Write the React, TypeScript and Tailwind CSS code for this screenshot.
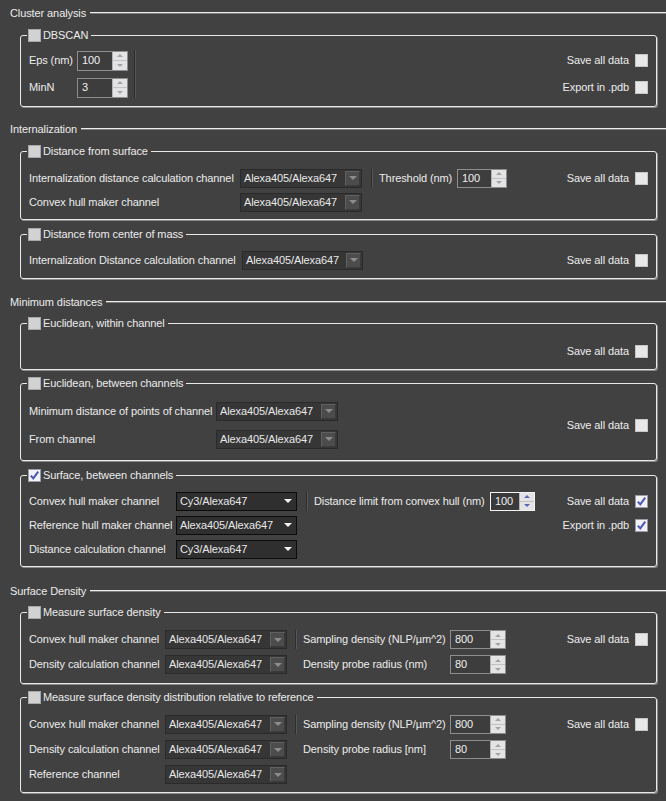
import React from 'react';

type Kids = { children?: React.ReactNode };

const Check = ({ on, title }: { on?: boolean; title?: boolean }) => (
  <span
    className={`flex h-[13px] w-[13px] shrink-0 items-center justify-center border ${
      on
        ? 'border-[#9a9aa8] bg-[#f2f2f6]'
        : title
          ? 'border-[#a8a8a8] bg-[#d2d2d2]'
          : 'border-[#c6c6c6] bg-[#e8e8e8]'
    }`}
  >
    {on && (
      <svg width="11" height="11" viewBox="0 0 11 11">
        <path d="M1.8 5.6 L4.3 8.4 L9.2 1.6" stroke="#4a58b4" strokeWidth="2" fill="none" />
      </svg>
    )}
  </span>
);

const Tri = ({ up, color }: { up?: boolean; color: string }) => (
  <span
    className={`h-0 w-0 border-x-[3px] border-x-transparent ${up ? 'border-b-[3px]' : 'border-t-[3px]'} ${color}`}
  />
);

const Spin = ({ v, w, on, tall }: { v: string; w: string; on?: boolean; tall?: boolean }) => (
  <div
    className={`flex shrink-0 ${tall ? 'h-[20px]' : 'h-[19px]'} ${w} border ${
      on ? 'border-[#f4f4f4] bg-[#3a3a3a]' : 'border-[#8e8e8e] bg-[#3d3d3d]'
    }`}
  >
    <span className="flex flex-1 items-center pl-[4px] text-[#f0f0f0]">{v}</span>
    <div className="flex w-[15px] flex-col border-l border-[#b4b4b4] bg-[#e4e4e6]">
      <span className="flex flex-1 items-center justify-center border-b border-[#c2c2c2]">
        <Tri up color={on ? 'border-b-[#5a68b0] border-t-[#5a68b0]' : 'border-b-[#a4a4a4] border-t-[#a4a4a4]'} />
      </span>
      <span className="flex flex-1 items-center justify-center">
        <Tri color={on ? 'border-b-[#5a68b0] border-t-[#5a68b0]' : 'border-b-[#a4a4a4] border-t-[#a4a4a4]'} />
      </span>
    </div>
  </div>
);

const Combo = ({ v, w, on }: { v: string; w: string; on?: boolean }) => (
  <div
    className={`flex h-[19px] shrink-0 ${w} items-center border ${
      on ? 'border-[#0c0c0c] bg-[#2f2f2f]' : 'border-[#2a2a2a] bg-[#363636]'
    }`}
  >
    <span className="flex-1 pl-[3px] text-[#e8e8e8]">{v}</span>
    {on ? (
      <span className="mr-[2px] flex h-[13px] w-[13px] items-center justify-center">
        <span className="h-0 w-0 border-x-[4px] border-t-[4px] border-x-transparent border-t-[#f4f4f4]" />
      </span>
    ) : (
      <span className="mr-[1px] flex h-[15px] w-[15px] items-center justify-center border border-t-[#606060] border-l-[#606060] border-b-[#3a3a3a] border-r-[#3a3a3a] bg-[#4c4c4c]">
        <span className="h-0 w-0 border-x-[4px] border-t-[4px] border-x-transparent border-t-[#8c8c8c]" />
      </span>
    )}
  </div>
);

const Sep = ({ className = '' }: { className?: string }) => (
  <span className={`w-[2px] shrink-0 border-l border-r border-l-[#2e2e2e] border-r-[#565656] ${className}`} />
);

const Save = ({ text = 'Save all data', on }: { text?: string; on?: boolean }) => (
  <span className="ml-auto flex items-center gap-[6px]">
    {text}
    <Check on={on} />
  </span>
);

const Section = ({ title, className = '' }: { title: string; className?: string }) => (
  <div className={`flex h-[14px] items-center pl-[10px] ${className}`}>
    <span className="mr-[4px]">{title}</span>
    <span className="h-[2px] flex-1 border-t border-b border-t-[#ececec] border-b-[#7c7c7c]" />
  </div>
);

const Group = ({ title, on, className = '', children }: Kids & { title: string; on?: boolean; className?: string }) => (
  <fieldset
    className={`mr-[9px] ml-[20px] rounded-[3px] border border-[#e8e8e8] px-[8px] shadow-[1px_1px_0_0_#8a8a8a] ${className}`}
  >
    <legend className="-ml-[2px] flex h-[14px] items-center gap-[2px] px-[1px]">
      <Check on={on} title={!on} />
      <span className="pr-[2px]">{title}</span>
    </legend>
    {children}
  </fieldset>
);

export default function App() {
  return (
    <div className="min-h-[801px] w-[666px] whitespace-nowrap bg-[#414141] pt-[6px] font-['Liberation_Sans',Arial,sans-serif] text-[11px] tracking-[-0.1px] text-[#ececec]">
      <Section title="Cluster analysis" />
      <Group title="DBSCAN" className="mt-[8px]">
        <div className="flex pt-[5px] pb-[5px]">
          <div className="flex flex-col">
            <div className="flex h-[27px] items-center">
              <span className="w-[48px]">Eps (nm)</span>
              <Spin v="100" w="w-[51px]" tall />
            </div>
            <div className="flex h-[27px] items-center">
              <span className="w-[48px]">MinN</span>
              <Spin v="3" w="w-[51px]" tall />
            </div>
          </div>
          <Sep className="my-[3px] ml-[6px]" />
          <div className="flex flex-1 flex-col">
            <div className="flex h-[27px] items-center">
              <Save />
            </div>
            <div className="flex h-[27px] items-center">
              <Save text="Export in .pdb" />
            </div>
          </div>
        </div>
      </Group>

      <Section title="Internalization" className="mt-[15px]" />
      <Group title="Distance from surface" className="mt-[8px]">
        <div className="flex flex-col pt-[8px] pb-[5px]">
          <div className="flex h-[24px] items-center">
            <span className="w-[211px]">Internalization distance calculation channel</span>
            <Combo v="Alexa405/Alexa647" w="w-[122px]" />
            <Sep className="ml-[9px] h-[19px]" />
            <span className="ml-[6px] w-[78px]">Threshold (nm)</span>
            <Spin v="100" w="w-[50px]" />
            <Save />
          </div>
          <div className="flex h-[24px] items-center">
            <span className="w-[211px]">Convex hull maker channel</span>
            <Combo v="Alexa405/Alexa647" w="w-[122px]" />
          </div>
        </div>
      </Group>
      <Group title="Distance from center of mass" className="mt-[7px]">
        <div className="flex flex-col pt-[7px] pb-[6px]">
          <div className="flex h-[24px] items-center">
            <span className="w-[213px]">Internalization Distance calculation channel</span>
            <Combo v="Alexa405/Alexa647" w="w-[121px]" />
            <Save />
          </div>
        </div>
      </Group>

      <Section title="Minimum distances" className="mt-[16px]" />
      <Group title="Euclidean, within channel" className="mt-[7px]">
        <div className="flex flex-col pt-[9px] pb-[6px]">
          <div className="flex h-[24px] items-center">
            <Save />
          </div>
        </div>
      </Group>
      <Group title="Euclidean, between channels" className="mt-[6px]">
        <div className="flex pt-[7px] pb-[7px]">
          <div className="flex flex-col">
            <div className="flex h-[28px] items-center">
              <span className="w-[187px]">Minimum distance of points of channel</span>
              <Combo v="Alexa405/Alexa647" w="w-[122px]" />
            </div>
            <div className="flex h-[28px] items-center">
              <span className="w-[187px]">From channel</span>
              <Combo v="Alexa405/Alexa647" w="w-[122px]" />
            </div>
          </div>
          <div className="flex flex-1 items-center">
            <Save />
          </div>
        </div>
      </Group>
      <Group title="Surface, between channels" on className="mt-[7px]">
        <div className="flex flex-col pt-[7px] pb-[5px]">
          <div className="flex h-[24px] items-center">
            <span className="w-[147px]">Convex hull maker channel</span>
            <Combo v="Cy3/Alexa647" w="w-[121px]" on />
            <Sep className="ml-[9px] h-[19px]" />
            <span className="ml-[6px] w-[176px]">Distance limit from convex hull (nm)</span>
            <Spin v="100" w="w-[45px]" on />
            <Save on />
          </div>
          <div className="flex h-[24px] items-center">
            <span className="w-[147px]">Reference hull maker channel</span>
            <Combo v="Alexa405/Alexa647" w="w-[121px]" on />
            <Save text="Export in .pdb" on />
          </div>
          <div className="flex h-[24px] items-center">
            <span className="w-[147px]">Distance calculation channel</span>
            <Combo v="Cy3/Alexa647" w="w-[121px]" on />
          </div>
        </div>
      </Group>

      <Section title="Surface Density" className="mt-[17px]" />
      <Group title="Measure surface density" className="mt-[7px]">
        <div className="flex flex-col pt-[8px] pb-[6px]">
          <div className="flex h-[25px] items-center">
            <span className="w-[136px]">Convex hull maker channel</span>
            <Combo v="Alexa405/Alexa647" w="w-[122px]" />
            <Sep className="ml-[8px] h-[19px]" />
            <span className="ml-[6px] w-[147px]">Sampling density (NLP/µm^2)</span>
            <Spin v="800" w="w-[56px]" />
            <Save />
          </div>
          <div className="flex h-[25px] items-center">
            <span className="w-[136px]">Density calculation channel</span>
            <Combo v="Alexa405/Alexa647" w="w-[122px]" />
            <span className="ml-[8px] w-[2px]" />
            <span className="ml-[6px] w-[147px]">Density probe radius (nm)</span>
            <Spin v="80" w="w-[56px]" />
          </div>
        </div>
      </Group>
      <Group title="Measure surface density distribution relative to reference" className="mt-[6px]">
        <div className="flex flex-col pt-[7px] pb-[5px]">
          <div className="flex h-[26px] items-center">
            <span className="w-[136px]">Convex hull maker channel</span>
            <Combo v="Alexa405/Alexa647" w="w-[122px]" />
            <Sep className="ml-[8px] h-[19px]" />
            <span className="ml-[6px] w-[147px]">Sampling density (NLP/µm^2)</span>
            <Spin v="800" w="w-[56px]" />
            <Save />
          </div>
          <div className="flex h-[25px] items-center">
            <span className="w-[136px]">Density calculation channel</span>
            <Combo v="Alexa405/Alexa647" w="w-[122px]" />
            <span className="ml-[8px] w-[2px]" />
            <span className="ml-[6px] w-[147px]">Density probe radius [nm]</span>
            <Spin v="80" w="w-[56px]" />
          </div>
          <div className="flex h-[25px] items-center">
            <span className="w-[136px]">Reference channel</span>
            <Combo v="Alexa405/Alexa647" w="w-[122px]" />
          </div>
        </div>
      </Group>
    </div>
  );
}
